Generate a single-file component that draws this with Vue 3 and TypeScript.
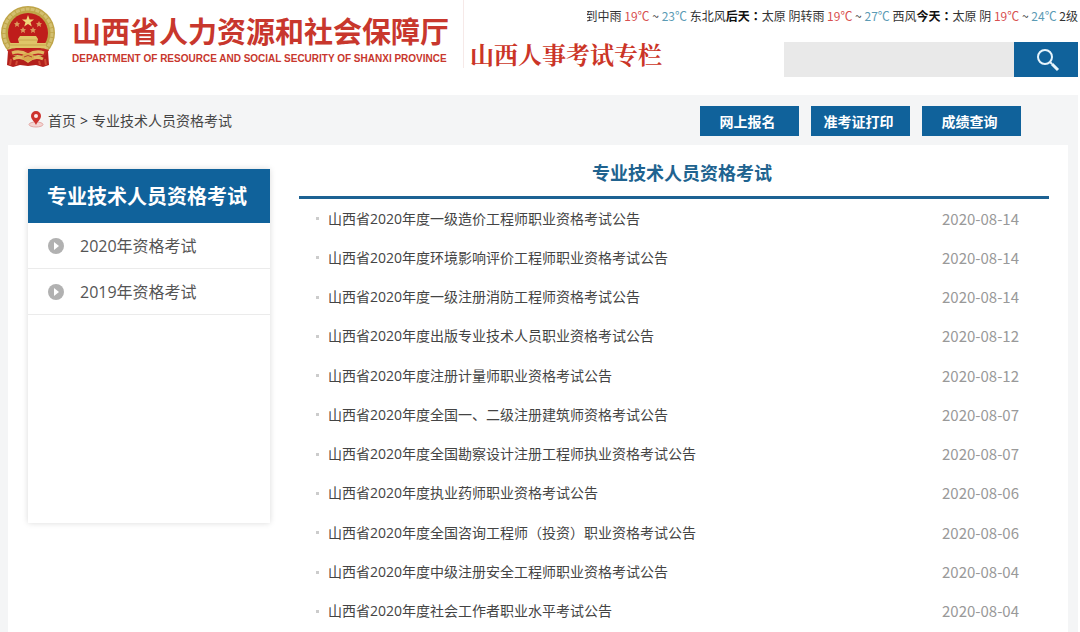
<script setup lang="ts">
import { ref } from 'vue'

interface Forecast {
  day: string
  place: string
  sky: string
  low: string
  high: string
  wind: string
}

interface Notice {
  title: string
  date: string
}

const forecasts: Forecast[] = [
  { day: '', place: '', sky: '到中雨', low: '19℃', high: '23℃', wind: '东北风' },
  { day: '后天', place: '太原', sky: '阴转雨', low: '19℃', high: '27℃', wind: '西风' },
  { day: '今天', place: '太原', sky: '阴', low: '19℃', high: '24℃', wind: '2级' },
]

const services: string[] = ['网上报名', '准考证打印', '成绩查询']
const years: string[] = ['2020年资格考试', '2019年资格考试']

const notices: Notice[] = [
  { title: '山西省2020年度一级造价工程师职业资格考试公告', date: '2020-08-14' },
  { title: '山西省2020年度环境影响评价工程师职业资格考试公告', date: '2020-08-14' },
  { title: '山西省2020年度一级注册消防工程师资格考试公告', date: '2020-08-14' },
  { title: '山西省2020年度出版专业技术人员职业资格考试公告', date: '2020-08-12' },
  { title: '山西省2020年度注册计量师职业资格考试公告', date: '2020-08-12' },
  { title: '山西省2020年度全国一、二级注册建筑师资格考试公告', date: '2020-08-07' },
  { title: '山西省2020年度全国勘察设计注册工程师执业资格考试公告', date: '2020-08-07' },
  { title: '山西省2020年度执业药师职业资格考试公告', date: '2020-08-06' },
  { title: '山西省2020年度全国咨询工程师（投资）职业资格考试公告', date: '2020-08-06' },
  { title: '山西省2020年度中级注册安全工程师职业资格考试公告', date: '2020-08-04' },
  { title: '山西省2020年度社会工作者职业水平考试公告', date: '2020-08-04' },
]

const keyword = ref('')
</script>

<template>
  <div class="page">
    <header class="header">
      <a class="brand" href="#">
        <svg class="emblem" viewBox="0 0 56 64" aria-hidden="true">
          <path d="M8 46 L48 46 L49 60 L43 62 L36 60 L28 61 L20 60 L13 62 L7 60 Z" fill="#b3201c" />
          <circle cx="28" cy="28" r="27" fill="#bfa548" />
          <circle cx="28" cy="28" r="24" fill="none" stroke="#d3bf70" stroke-width="3" stroke-dasharray="4 1" />
          <circle cx="28" cy="28" r="20" fill="#bf1d1b" />
          <path d="M28 10 L29.600 14.500 L34 14.500 L30.500 17.200 L31.800 21.500 L28 19 L24.200 21.500 L25.500 17.200 L22 14.500 L26.400 14.500 Z" fill="#f0d77a" />
          <path d="M17 16 l1 2 2 .2 -1.500 1.500 .5 2.200 -2 -1.200 -2 1.200 .5 -2.200 -1.500 -1.500 2 -.2z M39 16 l1 2 2 .2 -1.500 1.500 .5 2.200 -2 -1.200 -2 1.200 .5 -2.200 -1.500 -1.500 2 -.2z M23 22 l1 2 2 .2 -1.500 1.500 .5 2.200 -2 -1.200 -2 1.200 .5 -2.200 -1.500 -1.500 2 -.2z M33 22 l1 2 2 .2 -1.500 1.500 .5 2.200 -2 -1.200 -2 1.200 .5 -2.200 -1.500 -1.500 2 -.2z" fill="#dc9a5c" />
          <path d="M20 31 L36 31 L38 34 L37 38 H46 V43 H10 V38 H19 L18 34 Z" fill="#dfc568" />
          <path d="M10 40 H46 M19 35 H37" stroke="#c9a64c" stroke-width="1" />
          <path d="M7 45 Q17 41 28 46 Q39 41 49 45 L45 51 Q36 48 28 53 Q20 48 11 51 Z" fill="#c02622" />
          <path d="M12 48 Q20 45 28 50 Q36 45 44 48 M13 54 Q21 50 28 56 Q35 50 43 54" fill="none" stroke="#e0b860" stroke-width="3" />
          <ellipse cx="28" cy="52" rx="6" ry="4" fill="#d8a94c" />
          <path d="M24 52 Q28 49 32 52" fill="none" stroke="#b84430" stroke-width="1" />
          <path d="M11 54 L10 60 M17 56 L16 60 M39 56 L40 60 M45 54 L46 60" stroke="#d14b36" stroke-width="2" />
        </svg>
        <span class="names">
          <span class="name-cn">山西省人力资源和社会保障厅</span>
          <span class="name-en">DEPARTMENT OF RESOURCE AND SOCIAL SECURITY OF SHANXI PROVINCE</span>
        </span>
      </a>
      <a class="column-name" href="#">山西人事考试专栏</a>
      <div class="tools">
        <div class="weather">
          <div class="ticker">
            <span v-for="(f, i) in forecasts" :key="i" class="forecast"><b v-if="f.day">{{ f.day }}<span class="colon">：</span></b><template v-if="f.place">{{ f.place }}&nbsp;</template>{{ f.sky }} <span class="low">{{ f.low }}</span> ~ <span class="high">{{ f.high }}</span> {{ f.wind }}</span>
          </div>
        </div>
        <form class="search" role="search" @submit.prevent>
          <input v-model="keyword" class="search-box" type="text" aria-label="搜索" />
          <button class="search-button" type="submit" aria-label="搜索">
            <svg class="search-icon" viewBox="0 0 24 24" aria-hidden="true">
              <circle cx="9" cy="9" r="7" fill="none" stroke="#e6f4fc" stroke-width="2" />
              <path d="M14 14 L16 16" stroke="#e6f4fc" stroke-width="2" />
              <path d="M16 16 L22 22" stroke="#e6f4fc" stroke-width="3" />
            </svg>
          </button>
        </form>
      </div>
    </header>

    <div class="body">
      <div class="bar">
        <nav class="crumbs" aria-label="位置">
          <svg class="pin" viewBox="0 0 16 17" aria-hidden="true">
            <ellipse cx="8" cy="13.500" rx="7" ry="2.500" fill="#f4d5d3" stroke="#e4a8a5" />
            <path d="M8 14 C7 11 3 8.500 3 5 A5 5 0 0 1 13 5 C13 8.500 9 11 8 14 Z" fill="#cd332e" />
            <circle cx="8" cy="5" r="2" fill="#fbeceb" />
          </svg>
          <a href="#">首页</a>
          <span class="arrow">&gt;</span>
          <a href="#">专业技术人员资格考试</a>
        </nav>
        <div class="services">
          <button v-for="s in services" :key="s" class="service" type="button">{{ s }}</button>
        </div>
      </div>

      <div class="panel">
        <aside class="side">
          <h2 class="side-title">专业技术人员资格考试</h2>
          <ul class="years">
            <li v-for="y in years" :key="y">
              <a class="year" href="#">
                <svg class="play" viewBox="0 0 16 16" aria-hidden="true">
                  <circle cx="8" cy="8" r="8" fill="#b1b1b1" />
                  <path d="M6 4 L11 8 L6 12 Z" fill="#fff" />
                </svg>
                {{ y }}
              </a>
            </li>
          </ul>
        </aside>

        <main class="main">
          <h1 class="main-title">专业技术人员资格考试</h1>
          <ul class="notices">
            <li v-for="n in notices" :key="n.title" class="notice">
              <a class="notice-link" href="#">{{ n.title }}</a>
              <time class="date" :datetime="n.date">{{ n.date }}</time>
            </li>
          </ul>
        </main>
      </div>
    </div>
  </div>
</template>

<style>
body {
  margin: 0;
  background: #fff;
}
</style>

<style scoped>
.page {
  min-height: 100vh;
  display: flex;
  flex-direction: column;
  box-sizing: border-box;
  padding-right: 2px;
  overflow: hidden;
  color: #444;
  font: 14px/20px "Open Sans", "Noto Sans CJK SC", sans-serif;
}
a {
  color: inherit;
  text-decoration: none;
}
ul {
  list-style: none;
  margin: 0;
  padding: 0;
}
h1,
h2 {
  margin: 0;
}

.header {
  display: flex;
  height: 95px;
}
.brand {
  display: flex;
  flex: none;
  align-items: flex-start;
  gap: 16px;
  box-sizing: border-box;
  height: 68px;
  padding: 5px 9px 0 0;
  border-right: 1px solid #f6e9e8;
  color: #c8372d;
}
.emblem {
  width: 56px;
  height: 64px;
}
.names {
  display: flex;
  flex-direction: column;
  width: 382px;
  padding-top: 7px;
  white-space: nowrap;
}
.name-cn {
  font: bold 29px/36px "Noto Sans CJK SC", sans-serif;
}
.name-en {
  font: bold 10px/22px "Liberation Sans", sans-serif;
}
.column-name {
  flex: none;
  padding: 38px 0 0 6px;
  color: #cb3527;
  font: bold 24px/32px "Noto Serif CJK SC", "Noto Sans CJK SC", serif;
}
.tools {
  flex: 1;
  min-width: 0;
  display: flex;
  flex-direction: column;
  align-items: flex-end;
  margin-left: -75px;
}
.weather {
  width: 100%;
  display: flex;
  justify-content: flex-end;
  overflow: hidden;
  padding-top: 6px;
}
.ticker {
  flex: none;
  white-space: nowrap;
  color: #333;
  font: 12px/20px "Noto Sans CJK SC", sans-serif;
}
.forecast b {
  color: #111;
}
.colon {
  font-family: "Noto Sans CJK TC", sans-serif;
}
.low {
  color: #d8504f;
}
.high {
  color: #5b9bb5;
}
.search {
  display: flex;
  width: 294px;
  height: 35px;
  margin-top: 16px;
}
.search-box {
  flex: 1;
  min-width: 0;
  box-sizing: border-box;
  padding: 0 8px;
  border: 0;
  border-radius: 0;
  background: #e9e9e9;
  font: inherit;
}
.search-button {
  width: 64px;
  display: flex;
  align-items: center;
  justify-content: center;
  padding: 0 0 0 4px;
  border: 0;
  background: #10629b;
}
.search-icon {
  width: 24px;
  height: 24px;
}

.body {
  flex: 1;
  display: flex;
  flex-direction: column;
  padding: 0 10px 0 8px;
  background: #f4f5f6;
}
.bar {
  display: flex;
  align-items: center;
  justify-content: space-between;
  box-sizing: border-box;
  height: 50px;
  padding: 2px 47px 0 20px;
}
.crumbs {
  display: flex;
  align-items: center;
  gap: 4px;
}
.pin {
  width: 16px;
  height: 17px;
  margin-bottom: 4px;
}
.arrow {
  color: #333;
  font-size: 14px;
}
.services {
  display: flex;
  gap: 12px;
}
.service {
  width: 99px;
  height: 30px;
  padding: 0 4px 0 0;
  border: 0;
  background: #10629b;
  color: #fff;
  font: bold 14px/20px "Noto Sans CJK SC", sans-serif;
}

.panel {
  flex: 1;
  display: flex;
  align-items: flex-start;
  gap: 29px;
  padding: 0 19px 0 20px;
  background: #fff;
}
.side {
  flex: none;
  width: 242px;
  min-height: 354px;
  margin-top: 24px;
  background: #fff;
  box-shadow: 0 0 6px rgba(0, 0, 0, 0.15);
}
.side-title {
  padding: 1px 0 0 19px;
  background: #10629b;
  color: #fff;
  font-size: 20px;
  line-height: 53px;
}
.year {
  display: flex;
  align-items: center;
  gap: 16px;
  height: 45px;
  padding-left: 20px;
  border-bottom: 1px solid #ebebeb;
  color: #555;
  font-size: 16px;
}
.play {
  width: 16px;
  height: 16px;
}
.main {
  flex: 1;
  align-self: stretch;
  min-width: 0;
  display: flex;
  flex-direction: column;
}
.main-title {
  padding: 16px 0 11px 16px;
  border-bottom: 3px solid #1d6293;
  color: #20638f;
  font-size: 18px;
  line-height: 24px;
  text-align: center;
}
.notices {
  flex: 1;
  display: flex;
  flex-direction: column;
  padding: 0 30px 1px 17px;
}
.notice {
  flex: 1 0 39px;
  display: flex;
  align-items: center;
}
.notice::before {
  content: "";
  width: 3px;
  height: 3px;
  margin-right: 9px;
  background: #ccc;
}
.notice-link {
  flex: 1;
}
.date {
  color: #999;
  font: 15px/20px "Noto Sans CJK SC", sans-serif;
}
</style>
